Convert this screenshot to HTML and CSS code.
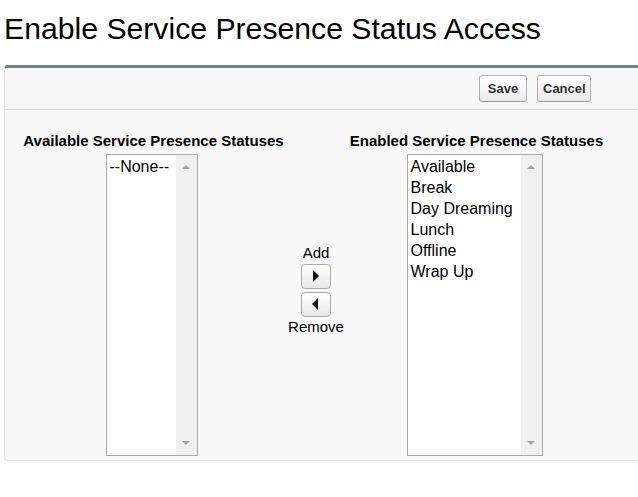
FILE: index.html
```html
<!DOCTYPE html>
<html lang="en">
<head>
<meta charset="utf-8">
<title>Enable Service Presence Status Access</title>
<link rel="stylesheet" href="styles.css">
</head>
<body>
<div class="page">
  <h1 class="page-title">Enable Service Presence Status Access</h1>
  <div class="block">
    <div class="block-header">
      <button class="btn btn-save" type="button">Save</button>
      <button class="btn btn-cancel" type="button">Cancel</button>
    </div>
    <div class="block-body">
      <div class="dueling">
        <div class="col-label col-left">Available Service Presence Statuses</div>
        <div class="col-label col-right">Enabled Service Presence Statuses</div>
        <div class="listbox listbox-left">
          <ul class="list-items">
            <li>--None--</li>
          </ul>
          <div class="scrollbar"><span class="arrow-up"></span><span class="arrow-down"></span></div>
        </div>
        <div class="mover">
          <span class="mover-text mover-add">Add</span>
          <button class="arrow-btn arrow-btn-add" type="button" aria-label="Add"><span class="tri-right"></span></button>
          <button class="arrow-btn arrow-btn-remove" type="button" aria-label="Remove"><span class="tri-left"></span></button>
          <span class="mover-text mover-remove">Remove</span>
        </div>
        <div class="listbox listbox-right">
          <ul class="list-items">
            <li>Available</li>
            <li>Break</li>
            <li>Day Dreaming</li>
            <li>Lunch</li>
            <li>Offline</li>
            <li>Wrap Up</li>
          </ul>
          <div class="scrollbar"><span class="arrow-up"></span><span class="arrow-down"></span></div>
        </div>
      </div>
    </div>
  </div>
</div>
</body>
</html>
```

FILE: styles.css
```css
* { box-sizing: border-box; }

html, body {
  margin: 0;
  padding: 0;
  background: #ffffff;
  overflow: hidden;
}

body {
  font-family: "Liberation Sans", Arial, sans-serif;
  color: #000;
}

.page {
  padding-left: 4px;
}

.page-title {
  margin: 12px 0 19px 0;
  font-size: 30.2px;
  line-height: 34px;
  font-weight: normal;
  color: #000;
  white-space: nowrap;
}

.block {
  background: #f8f8f8;
  border-top: 3px solid #747e96;
  border-left: 1px solid #e6e6e6;
  border-bottom: 1px solid #e2e2e2;
  border-radius: 4px 0 0 4px;
}

.block-header {
  display: flex;
  justify-content: flex-end;
  gap: 10px;
  padding: 7px 47px 7px 0;
  border-bottom: 1px solid #dcdcdc;
}

.btn {
  height: 27px;
  padding: 0 5px;
  font-family: "Liberation Sans", Arial, sans-serif;
  font-size: 13px;
  font-weight: bold;
  color: #333;
  background: linear-gradient(#ffffff, #f3f3f3 60%, #e9e9e9);
  border: 1px solid #b0b0b0;
  border-bottom-color: #989898;
  border-radius: 3px;
}

.btn-save { width: 48px; }
.btn-cancel { width: 54px; }

.block-body {
  padding: 22px 0 4px 16px;
}

.dueling {
  display: grid;
  grid-template-columns: 265px 62px 257px;
  grid-template-rows: auto auto;
  row-gap: 5px;
  justify-items: center;
}

.col-label {
  font-size: 15px;
  line-height: 17px;
  font-weight: bold;
  white-space: nowrap;
  grid-row: 1;
}

.col-left { grid-column: 1; }
.col-right { grid-column: 3; }

.listbox {
  grid-row: 2;
  display: flex;
  height: 302px;
  margin-left: -4px;
  background: #fff;
  border: 1px solid #a9a9a9;
}

.listbox-left { grid-column: 1; width: 92px; }
.listbox-right { grid-column: 3; width: 136px; }

.list-items {
  flex: 1;
  list-style: none;
  margin: 0;
  padding: 1px 0 0 3px;
  font-size: 16px;
  line-height: 21px;
  white-space: nowrap;
  overflow: hidden;
}

.scrollbar {
  width: 21px;
  background: #f0f0f0;
  display: flex;
  flex-direction: column;
  justify-content: space-between;
  align-items: center;
  padding: 10px 0 10px 0;
}

.arrow-up {
  width: 0;
  height: 0;
  border-left: 4px solid transparent;
  border-right: 4px solid transparent;
  border-bottom: 4px solid #a3a3a3;
}

.arrow-down {
  width: 0;
  height: 0;
  border-left: 4px solid transparent;
  border-right: 4px solid transparent;
  border-top: 4px solid #a3a3a3;
}

.mover {
  grid-column: 2;
  grid-row: 1 / span 2;
  align-self: center;
  display: flex;
  flex-direction: column;
  align-items: center;
  margin-left: -2px;
  padding-bottom: 10px;
}

.mover-text {
  font-size: 15px;
  line-height: 17px;
  color: #000;
}

.mover-add { margin-bottom: 3px; }
.mover-remove { margin-top: 1px; }

.arrow-btn {
  width: 30px;
  height: 25px;
  padding: 0;
  display: flex;
  align-items: center;
  justify-content: center;
  background: linear-gradient(#ffffff, #f1f1f1 60%, #e6e6e6);
  border: 1px solid #ababab;
  border-radius: 4px;
}

.arrow-btn-remove { margin-top: 3px; }

.tri-right {
  width: 0;
  height: 0;
  border-top: 6px solid transparent;
  border-bottom: 6px solid transparent;
  border-left: 6px solid #111;
  margin-left: 1px;
}

.tri-left {
  width: 0;
  height: 0;
  border-top: 6px solid transparent;
  border-bottom: 6px solid transparent;
  border-right: 6px solid #111;
  margin-right: 1px;
}
```
